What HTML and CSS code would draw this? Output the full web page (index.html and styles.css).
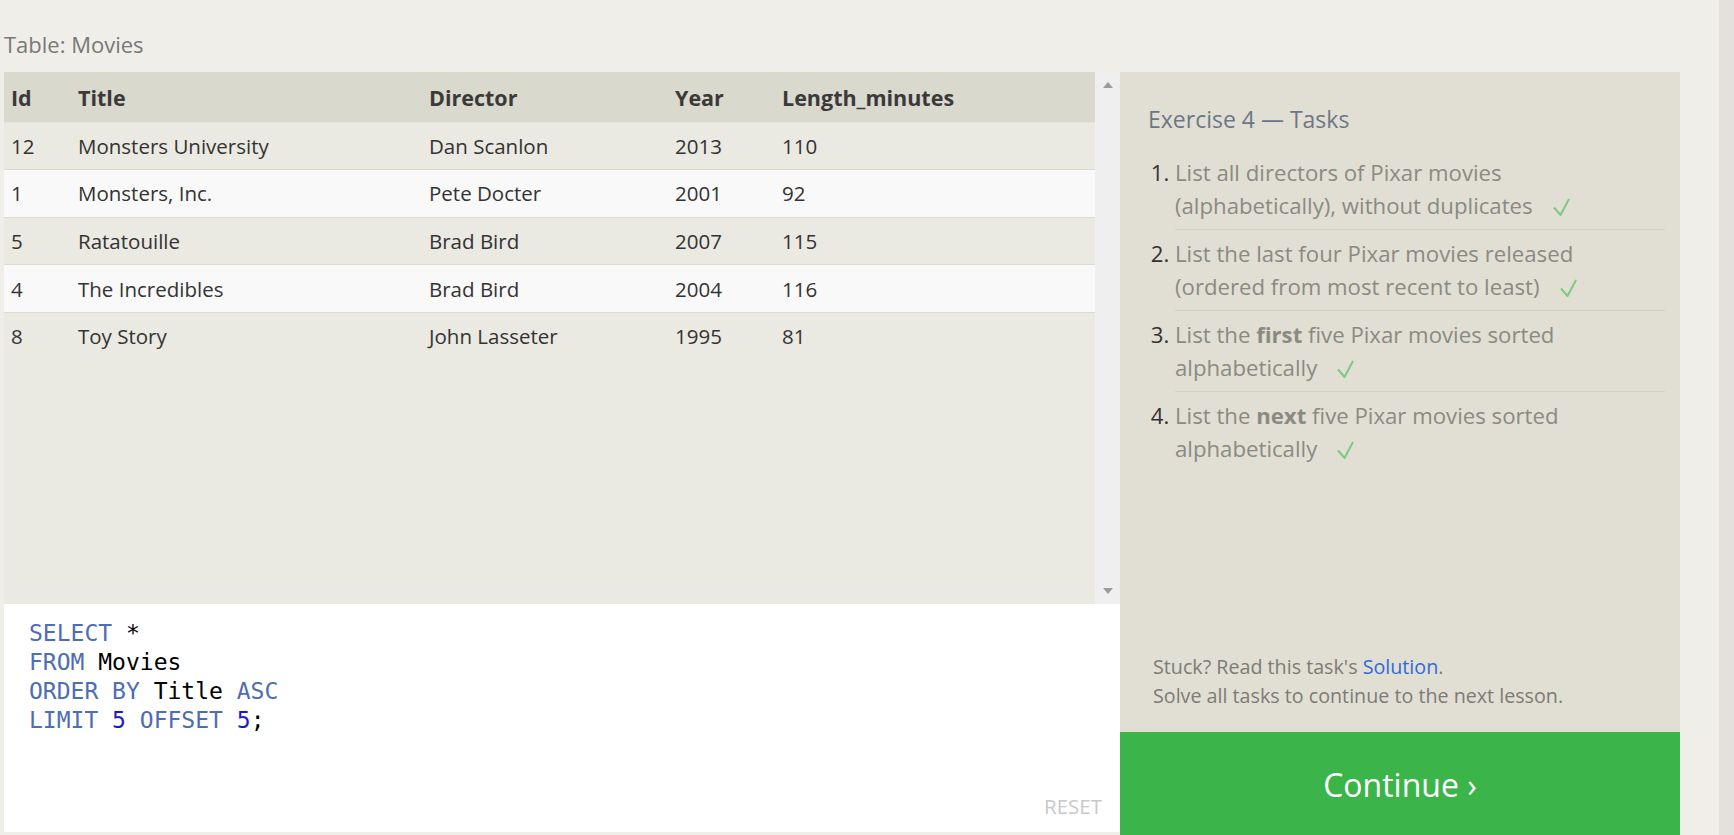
FILE: index.html
```html
<!DOCTYPE html>
<html lang="en">
<head>
<meta charset="utf-8">
<title>SQL Lesson - Exercise 4</title>
<link rel="stylesheet" href="styles.css">
</head>
<body>
<div class="page">
  <div class="main">
    <div class="caption">Table: Movies</div>
    <div class="workspace">
      <div class="left">
        <div class="results">
          <div class="table-wrap">
            <table class="data">
              <colgroup>
                <col class="c-id"><col class="c-title"><col class="c-director"><col class="c-year"><col class="c-len">
              </colgroup>
              <thead>
                <tr><th>Id</th><th>Title</th><th>Director</th><th>Year</th><th>Length_minutes</th></tr>
              </thead>
              <tbody>
                <tr><td>12</td><td>Monsters University</td><td>Dan Scanlon</td><td>2013</td><td>110</td></tr>
                <tr><td>1</td><td>Monsters, Inc.</td><td>Pete Docter</td><td>2001</td><td>92</td></tr>
                <tr><td>5</td><td>Ratatouille</td><td>Brad Bird</td><td>2007</td><td>115</td></tr>
                <tr><td>4</td><td>The Incredibles</td><td>Brad Bird</td><td>2004</td><td>116</td></tr>
                <tr><td>8</td><td>Toy Story</td><td>John Lasseter</td><td>1995</td><td>81</td></tr>
              </tbody>
            </table>
          </div>
          <div class="vscroll">
            <span class="arrow up"></span>
            <span class="arrow down"></span>
          </div>
        </div>
        <div class="editor">
<pre class="code"><span class="kw">SELECT</span> *
<span class="kw">FROM</span> Movies
<span class="kw">ORDER BY</span> Title <span class="kw">ASC</span>
<span class="kw">LIMIT</span> <span class="num">5</span> <span class="kw">OFFSET</span> <span class="num">5</span>;</pre>
          <div class="reset">RESET</div>
        </div>
      </div>
      <div class="right">
        <div class="tasks">
          <h2 class="tasks-title">Exercise 4 — Tasks</h2>
          <ol class="task-list">
            <li>List all directors of Pixar movies (alphabetically), without duplicates<svg class="check" width="17" height="18" viewBox="0 0 17 18"><polyline points="1,9.5 7.5,17 16,1" fill="none" stroke="#7dc97d" stroke-width="2"/></svg></li>
            <li>List the last four Pixar movies released (ordered from most recent to least)<svg class="check" width="17" height="18" viewBox="0 0 17 18"><polyline points="1,9.5 7.5,17 16,1" fill="none" stroke="#7dc97d" stroke-width="2"/></svg></li>
            <li>List the <strong>first</strong> five Pixar movies sorted alphabetically<svg class="check" width="17" height="18" viewBox="0 0 17 18"><polyline points="1,9.5 7.5,17 16,1" fill="none" stroke="#7dc97d" stroke-width="2"/></svg></li>
            <li>List the <strong>next</strong> five Pixar movies sorted alphabetically<svg class="check" width="17" height="18" viewBox="0 0 17 18"><polyline points="1,9.5 7.5,17 16,1" fill="none" stroke="#7dc97d" stroke-width="2"/></svg></li>
          </ol>
          <div class="help">
            <div>Stuck? Read this task's <a class="link" href="#">Solution</a>.</div>
            <div>Solve all tasks to continue to the next lesson.</div>
          </div>
        </div>
        <button class="continue">Continue ›</button>
      </div>
    </div>
  </div>
  <div class="spacer"></div>
  <div class="page-scrollbar"></div>
</div>
</body>
</html>
```
FILE: styles.css
```css
html, body {
  margin: 0;
  padding: 0;
  height: 100%;
  overflow: hidden;
}
body {
  background: #f0eee8;
  font-family: "Open Sans", "Noto Sans", sans-serif;
  color: #333;
}
.page {
  display: flex;
  height: 100%;
}
.main {
  margin-left: 4px;
  width: 1676px;
  flex: none;
}
.spacer {
  flex: 1;
}
.page-scrollbar {
  width: 15px;
  flex: none;
  background: #e3e0dd;
}
.caption {
  margin-top: 30px;
  height: 28px;
  line-height: 28px;
  margin-bottom: 14px;
  font-size: 22px;
  color: #787878;
}
.workspace {
  display: flex;
}
.left {
  width: 1116px;
  flex: none;
  display: flex;
  flex-direction: column;
}
.results {
  display: flex;
  height: 532px;
  background: #eae9e2;
}
.table-wrap {
  flex: 1;
  overflow: hidden;
}
.data {
  width: 100%;
  border-collapse: collapse;
  table-layout: fixed;
  font-size: 20.5px;
}
.c-id { width: 67px; }
.c-title { width: 351px; }
.c-director { width: 246px; }
.c-year { width: 107px; }
.data th, .data td {
  text-align: left;
  padding: 0 7px;
  white-space: nowrap;
}
.data th {
  height: 50px;
  background: #dad9cd;
  font-size: 21.5px;
  font-weight: 700;
  color: #3a3a3a;
  padding-top: 2px;
  box-sizing: border-box;
}
.data td {
  height: 46.6px;
  color: #333;
  border-top: 1px solid #dddcd4;
}
.data tbody tr:first-child td {
  border-top-color: #e4e3dc;
}
.data tbody tr:nth-child(odd) td { background: #eae9e2; }
.data tbody tr:nth-child(even) td { background: #f9f9f9; }
.vscroll {
  width: 25px;
  flex: none;
  background: #efefef;
  display: flex;
  flex-direction: column;
  justify-content: space-between;
  align-items: center;
  padding: 10px 0;
  box-sizing: border-box;
}
.arrow {
  width: 0;
  height: 0;
  border-left: 5.5px solid transparent;
  border-right: 5.5px solid transparent;
}
.arrow.up { border-bottom: 6px solid #9c9c9c; }
.arrow.down { border-top: 6px solid #9c9c9c; }
.editor {
  height: 228px;
  background: #fff;
  display: flex;
  flex-direction: column;
  justify-content: space-between;
}
.code {
  margin: 0;
  padding: 15px 0 0 25px;
  font-family: "DejaVu Sans Mono", "Liberation Mono", monospace;
  font-size: 23px;
  line-height: 29px;
  color: #000;
}
.kw { color: #4d6db5; }
.num { color: #1a1acc; }
.reset {
  align-self: flex-end;
  font-size: 20.5px;
  line-height: 24px;
  color: #c9c9c9;
  padding: 0 18px 14px 0;
}
.right {
  width: 560px;
  flex: none;
  display: flex;
  flex-direction: column;
}
.tasks {
  height: 660px;
  box-sizing: border-box;
  background: #e1dfd4;
  padding: 31px 15px 22px 28px;
  display: flex;
  flex-direction: column;
}
.tasks-title {
  margin: 0 0 14px;
  font-size: 23px;
  line-height: 32px;
  font-weight: 400;
  color: #6b7786;
}
.task-list {
  margin: 0;
  padding-left: 27px;
  flex: 1;
}
.task-list li {
  font-size: 22.2px;
  line-height: 33px;
  color: #8b8a82;
  padding: 7px 45px 7px 0;
  border-bottom: 1px solid #d5d3c8;
}
.task-list li:last-child {
  border-bottom: none;
}
.task-list li::marker {
  color: #333;
}
.task-list strong {
  font-weight: 700;
  color: #8b8a82;
}
.check {
  margin-left: 20px;
  vertical-align: -2px;
}
.help {
  font-size: 19.7px;
  line-height: 29px;
  color: #7d7b74;
  padding-left: 5px;
}
.link {
  color: #2f6bd8;
  text-decoration: none;
}
.continue {
  height: 110px;
  border: none;
  margin: 0;
  padding: 0 0 5px;
  background: #3bb54a;
  color: #fff;
  font-family: "Open Sans", "Noto Sans", sans-serif;
  font-size: 32px;
  cursor: pointer;
}
```
